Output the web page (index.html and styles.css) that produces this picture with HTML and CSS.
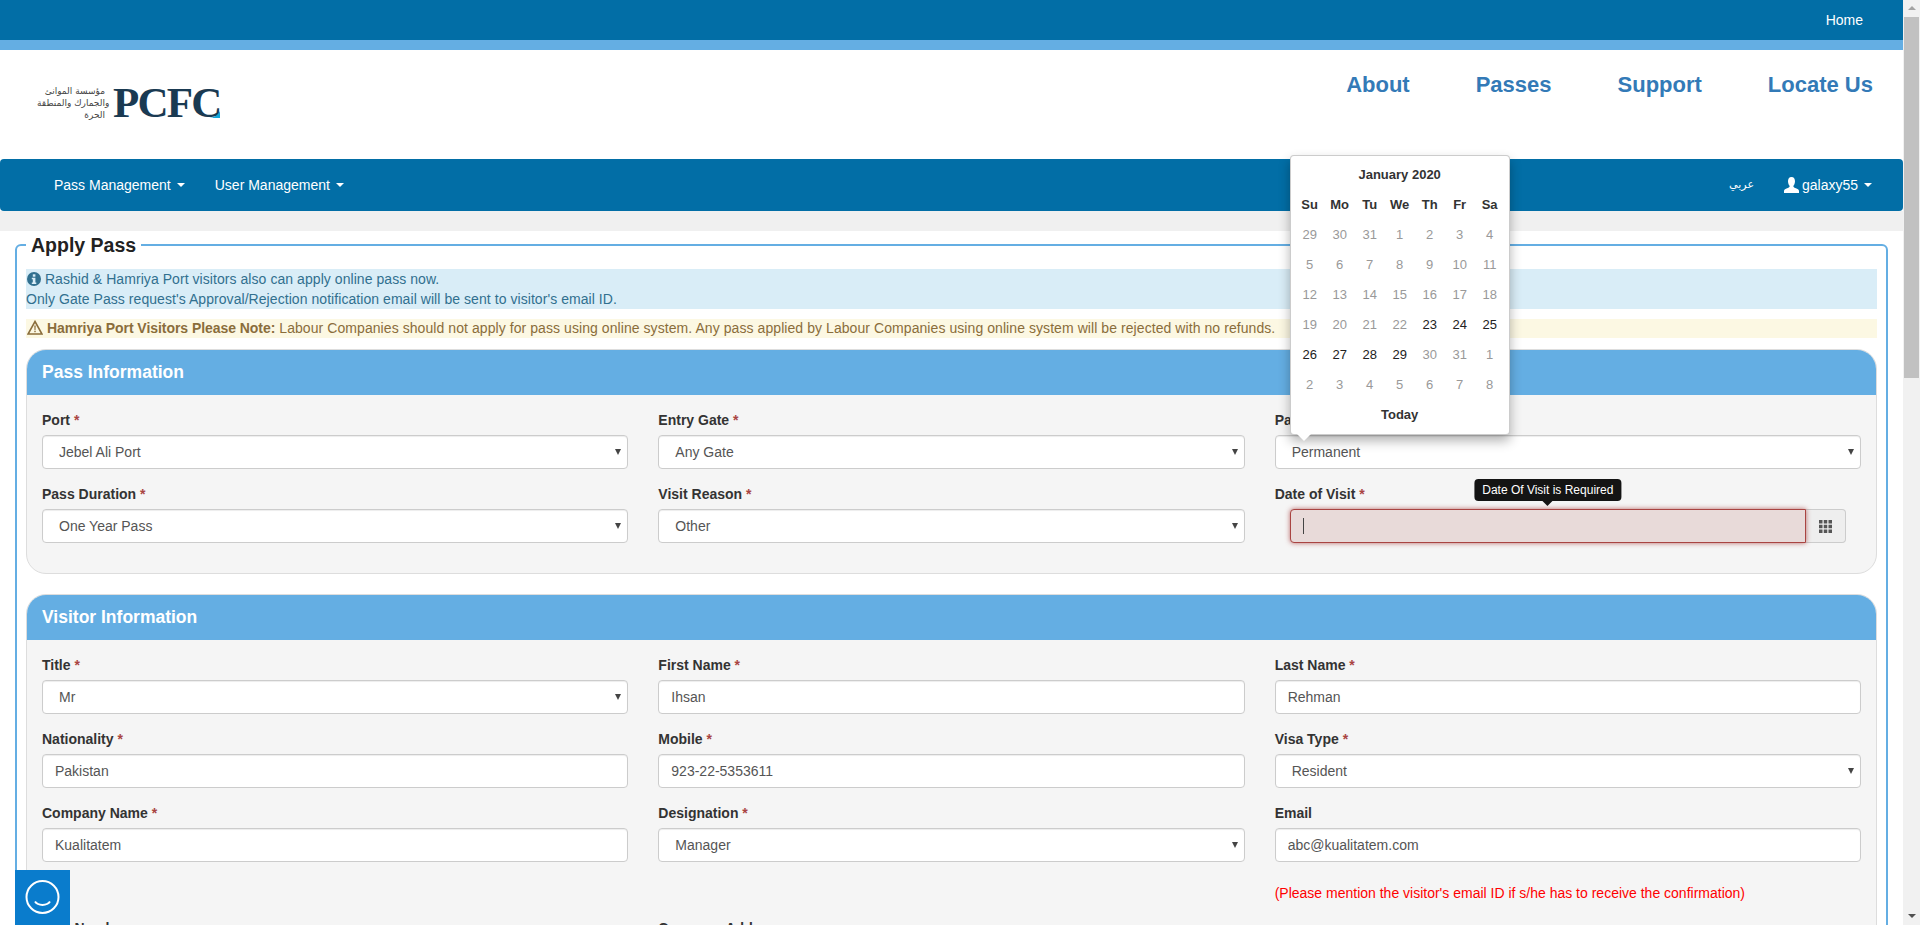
FILE: index.html
```html
<!DOCTYPE html>
<html>
<head>
  <title>Apply Pass</title>
  <link rel="stylesheet" href="styles.css">
</head>
<body>
<div class="window">
  <div class="page">

    <div class="top-bar"><a class="home-link">Home</a></div>

    <header class="site-header">
      <div class="logo">
        <div class="logo-arabic">مؤسسة الموانئ<br>والجمارك والمنطقة<br>الحرة</div>
        <div class="logo-word">PCFC</div>
        <svg class="logo-accent" width="11" height="7" viewBox="0 0 11 7"><path d="M11 0V7H0C5 7 9 4 11 0Z" fill="#12a5d8"/></svg>
      </div>
      <nav class="main-links">
        <a>About</a>
        <a>Passes</a>
        <a>Support</a>
        <a>Locate Us</a>
      </nav>
    </header>

    <nav class="navbar">
      <div class="nav-group">
        <a class="nav-item">Pass Management<span class="caret"></span></a>
        <a class="nav-item">User Management<span class="caret"></span></a>
      </div>
      <div class="nav-group">
        <a class="nav-item nav-arabic">عربي</a>
        <a class="nav-item">
          <svg class="user-icon" width="15" height="16" viewBox="0 0 15 16"><path d="M7.5 0C10 0 11 2 11 4.300C11 6.500 10 8.300 9.300 9C9.300 10.300 10.500 10.800 12.500 11.500C14 12 15 12.800 15 14V16H0V14C0 12.800 1 12 2.500 11.500C4.500 10.800 5.700 10.300 5.700 9C5 8.300 4 6.500 4 4.300C4 2 5 0 7.500 0Z" fill="#fff"/></svg>
          galaxy55<span class="caret"></span>
        </a>
      </div>
    </nav>

    <div class="grey-strip"></div>

    <fieldset class="apply-box">
      <legend>Apply Pass</legend>

      <div class="note-info">
        <svg class="note-icon" width="14" height="14" viewBox="0 0 14 14"><circle cx="7" cy="7" r="7" fill="#31708f"/><rect x="5.800" y="2.300" width="2.600" height="2.400" fill="#d9edf7"/><path d="M4.800 5.800H8.400V10.500H9.300V11.900H4.800V10.500H5.800V7.200H4.800Z" fill="#d9edf7"/></svg>
        Rashid &amp; Hamriya Port visitors also can apply online pass now.<br>
        Only Gate Pass request's Approval/Rejection notification email will be sent to visitor's email ID.
      </div>

      <div class="note-warning">
        <svg class="note-icon" width="16" height="15" viewBox="0 0 16 15"><path d="M8 1.500L15 14H1Z" fill="none" stroke="#8a6d3b" stroke-width="1.600"/><path d="M7.300 5.500H8.700L8.500 10H7.500Z" fill="#8a6d3b"/><rect x="7.300" y="10.700" width="1.400" height="1.500" fill="#8a6d3b"/></svg>
        <strong>Hamriya Port Visitors Please Note:</strong> Labour Companies should not apply for pass using online system. Any pass applied by Labour Companies using online system will be rejected with no refunds.
      </div>

      <section class="panel">
        <h3 class="panel-title">Pass Information</h3>
        <div class="panel-body form-grid">
          <div class="form-group">
            <label>Port <span class="req">*</span></label>
            <div class="select-box"><select><option>Jebel Ali Port</option></select></div>
          </div>
          <div class="form-group">
            <label>Entry Gate <span class="req">*</span></label>
            <div class="select-box"><select><option>Any Gate</option></select></div>
          </div>
          <div class="form-group">
            <label>Pass Type <span class="req">*</span></label>
            <div class="select-box"><select><option>Permanent</option></select></div>
          </div>
          <div class="form-group">
            <label>Pass Duration <span class="req">*</span></label>
            <div class="select-box"><select><option>One Year Pass</option></select></div>
          </div>
          <div class="form-group">
            <label>Visit Reason <span class="req">*</span></label>
            <div class="select-box"><select><option>Other</option></select></div>
          </div>
          <div class="form-group">
            <label>Date of Visit <span class="req">*</span></label>
            <div class="date-group">
              <div class="date-input">
                <input type="text" class="input-error">
                <span class="text-cursor"></span>
                <div class="tooltip">Date Of Visit is Required</div>
              </div>
              <div class="date-addon">
                <svg width="13" height="13" viewBox="0 0 13 13" fill="#555"><path d="M0 0h3.500v3.500H0zM4.750 0h3.500v3.500h-3.500zM9.500 0H13v3.500H9.500zM0 4.750h3.500v3.500H0zM4.750 4.750h3.500v3.500h-3.500zM9.500 4.750H13v3.500H9.500zM0 9.500h3.500V13H0zM4.750 9.500h3.500V13h-3.500zM9.500 9.500H13V13H9.500z"/></svg>
              </div>

              <div class="calendar">
                <table>
                  <tr><th colspan="7">January 2020</th></tr>
                  <tr><th>Su</th><th>Mo</th><th>Tu</th><th>We</th><th>Th</th><th>Fr</th><th>Sa</th></tr>
                  <tr class="off"><td>29</td><td>30</td><td>31</td><td>1</td><td>2</td><td>3</td><td>4</td></tr>
                  <tr class="off"><td>5</td><td>6</td><td>7</td><td>8</td><td>9</td><td>10</td><td>11</td></tr>
                  <tr class="off"><td>12</td><td>13</td><td>14</td><td>15</td><td>16</td><td>17</td><td>18</td></tr>
                  <tr class="off"><td>19</td><td>20</td><td>21</td><td>22</td><td class="on">23</td><td class="on">24</td><td class="on">25</td></tr>
                  <tr class="off"><td class="on">26</td><td class="on">27</td><td class="on">28</td><td class="on">29</td><td>30</td><td>31</td><td>1</td></tr>
                  <tr class="off"><td>2</td><td>3</td><td>4</td><td>5</td><td>6</td><td>7</td><td>8</td></tr>
                  <tr><th colspan="7">Today</th></tr>
                </table>
              </div>
            </div>
          </div>
        </div>
      </section>

      <section class="panel">
        <h3 class="panel-title">Visitor Information</h3>
        <div class="panel-body form-grid">
          <div class="form-group">
            <label>Title <span class="req">*</span></label>
            <div class="select-box"><select><option>Mr</option></select></div>
          </div>
          <div class="form-group">
            <label>First Name <span class="req">*</span></label>
            <input type="text" value="Ihsan">
          </div>
          <div class="form-group">
            <label>Last Name <span class="req">*</span></label>
            <input type="text" value="Rehman">
          </div>
          <div class="form-group">
            <label>Nationality <span class="req">*</span></label>
            <input type="text" value="Pakistan">
          </div>
          <div class="form-group">
            <label>Mobile <span class="req">*</span></label>
            <input type="text" value="923-22-5353611">
          </div>
          <div class="form-group">
            <label>Visa Type <span class="req">*</span></label>
            <div class="select-box"><select><option>Resident</option></select></div>
          </div>
          <div class="form-group">
            <label>Company Name <span class="req">*</span></label>
            <input type="text" value="Kualitatem">
          </div>
          <div class="form-group">
            <label>Designation <span class="req">*</span></label>
            <div class="select-box"><select><option>Manager</option></select></div>
          </div>
          <div class="form-group">
            <label>Email</label>
            <input type="text" value="abc@kualitatem.com">
            <p class="hint">(Please mention the visitor's email ID if s/he has to receive the confirmation)</p>
          </div>
          <div class="form-group">
            <label>Visa Number</label>
            <input type="text">
          </div>
          <div class="form-group">
            <label>Company Address</label>
            <input type="text">
          </div>
        </div>
      </section>
    </fieldset>

    <div class="chat-widget">
      <svg width="55" height="55" viewBox="0 0 55 55"><circle cx="27.500" cy="27" r="16" fill="none" stroke="#fff" stroke-width="2"/><path d="M20 31.500C23 36 32 36 35 31.500" fill="none" stroke="#fff" stroke-width="2"/></svg>
    </div>
  </div>

  <div class="scrollbar">
    <span class="scroll-up"></span>
    <div class="scroll-track"><div class="scroll-thumb"></div></div>
    <span class="scroll-down"></span>
  </div>
</div>
</body>
</html>
```

FILE: styles.css
```css
* {
  box-sizing: border-box;
}

html, body {
  margin: 0;
  height: 925px;
  overflow: hidden;
}

body {
  font-family: "Liberation Sans", Arial, sans-serif;
  font-size: 14px;
  line-height: 20px;
  color: #333;
  background: #fff;
}

.window {
  display: flex;
  height: 925px;
}

.page {
  position: relative;
  flex: 1;
  min-width: 0;
  height: 925px;
  overflow: hidden;
}

/* top */
.top-bar {
  display: flex;
  justify-content: flex-end;
  align-items: center;
  height: 50px;
  padding-right: 40px;
  background: #026ea6;
  border-bottom: 10px solid #64aee3;
}

.home-link {
  color: #fff;
}

.site-header {
  display: flex;
  justify-content: space-between;
  height: 109px;
  padding: 0 30px 0 37px;
}

.logo {
  position: relative;
  display: flex;
  align-items: center;
  gap: 8px;
  height: 31px;
  margin-top: 37px;
}

.logo-arabic {
  width: 68px;
  font-family: "DejaVu Sans", sans-serif;
  font-size: 9px;
  line-height: 12px;
  color: #444;
  text-align: right;
  white-space: nowrap;
}

.logo-word {
  font-family: "Liberation Serif", serif;
  font-size: 43px;
  font-weight: bold;
  letter-spacing: -1.800px;
  line-height: 31px;
  color: #1a3a52;
}

.logo-accent {
  position: absolute;
  right: 0;
  bottom: 0;
}

.main-links {
  display: flex;
  gap: 66px;
  padding-top: 22px;
  font-size: 22px;
  font-weight: bold;
  line-height: 26px;
  color: #337ab7;
}

.navbar {
  display: flex;
  justify-content: space-between;
  height: 52px;
  padding: 0 16px 0 39px;
  background: #026ea6;
  border-radius: 4px;
  color: #fff;
}

.nav-group {
  display: flex;
  align-items: center;
}

.nav-item {
  display: flex;
  align-items: center;
  padding: 0 15px;
  white-space: nowrap;
}

.nav-arabic {
  font-family: "DejaVu Sans", sans-serif;
  font-size: 11px;
}

.user-icon {
  margin-right: 3px;
}

.caret {
  display: inline-block;
  width: 0;
  height: 0;
  margin-left: 6px;
  border-top: 4px solid #fff;
  border-left: 4px solid transparent;
  border-right: 4px solid transparent;
}

.grey-strip {
  height: 20px;
  background: #f0f0f0;
}

/* main box */
.apply-box {
  min-width: 0;
  margin: 0 15px;
  padding: 10px 9px 9px;
  border: 2px solid #64aee3;
  border-radius: 6px;
}

.apply-box legend {
  padding: 0 5px;
  font-size: 19.500px;
  font-weight: bold;
  line-height: 28px;
  color: #222;
}

.note-info {
  background: #d9edf7;
  color: #31708f;
  letter-spacing: 0.06px;
}

.note-warning {
  height: 19px;
  margin-top: 10px;
  line-height: 19px;
  background: #fcf8e3;
  color: #8a6d3b;
  letter-spacing: 0.07px;
}

.note-warning strong {
  letter-spacing: -0.05px;
}

.note-icon {
  vertical-align: -2px;
  margin-left: 1px;
}

.panel {
  margin-top: 11px;
  background: #f5f5f5;
  border: 1px solid #ddd;
  border-radius: 20px;
}

.panel + .panel {
  margin-top: 20px;
}

.panel-title {
  height: 45px;
  margin: 0;
  padding: 0 15px;
  font-size: 17.500px;
  line-height: 45px;
  color: #fff;
  background: #64aee3;
  border-radius: 19px 19px 0 0;
}

.panel-body {
  padding: 15px;
}

.form-grid {
  display: grid;
  grid-template-columns: repeat(3, 1fr);
  column-gap: 30px;
}

.form-group {
  margin-bottom: 15px;
}

label {
  display: block;
  margin-bottom: 5px;
  font-weight: bold;
}

.req {
  color: #a94442;
}

input, select {
  display: block;
  width: 100%;
  height: 34px;
  font-family: "Liberation Sans", Arial, sans-serif;
  font-size: 14px;
  color: #555;
  background: #fff;
  border: 1px solid #ccc;
  border-radius: 4px;
  box-shadow: inset 0 1px 1px rgba(0,0,0,0.075);
}

input {
  padding: 6px 12px;
}

select {
  appearance: none;
  padding: 6px 12px 6px 16px;
}

.select-box {
  position: relative;
}

.select-box::after {
  content: "";
  position: absolute;
  top: 14px;
  right: 7px;
  border-top: 6px solid #444;
  border-left: 3.500px solid transparent;
  border-right: 3.500px solid transparent;
}

.hint {
  margin: 21px 0 0;
  color: #f00;
}

/* date of visit */
.date-group {
  position: relative;
  display: flex;
  margin: 0 15px;
}

.date-input {
  position: relative;
  flex: 1;
}

.input-error {
  background: #e8dad9;
  border-color: #a94442;
  border-radius: 4px 0 0 4px;
  box-shadow: 0 0 5px rgba(169,68,66,0.8);
}

.text-cursor {
  position: absolute;
  left: 13px;
  top: 9px;
  width: 1px;
  height: 16px;
  background: #444;
}

.date-addon {
  display: flex;
  align-items: center;
  justify-content: center;
  width: 40px;
  background: #eee;
  border: 1px solid #ccc;
  border-left: 0;
  border-radius: 0 4px 4px 0;
}

.tooltip {
  position: absolute;
  left: 50%;
  bottom: calc(100% + 8px);
  transform: translateX(-50%);
  padding: 2px 8px;
  font-size: 12px;
  line-height: 18px;
  white-space: nowrap;
  color: #fff;
  background: #141414;
  border-radius: 4px;
}

.tooltip::after {
  content: "";
  position: absolute;
  left: 50%;
  top: 100%;
  margin-left: -5px;
  border-top: 5px solid #141414;
  border-left: 5px solid transparent;
  border-right: 5px solid transparent;
}

.calendar {
  position: absolute;
  left: 0;
  bottom: calc(100% + 74px);
  z-index: 5;
  padding: 4px;
  background: #fff;
  border: 1px solid rgba(0,0,0,0.2);
  border-radius: 4px;
  box-shadow: 0 6px 12px rgba(0,0,0,0.3);
}

.calendar::after {
  content: "";
  position: absolute;
  left: 6px;
  top: 100%;
  border-top: 7px solid #fff;
  border-left: 7px solid transparent;
  border-right: 7px solid transparent;
}

.calendar table {
  border-collapse: collapse;
  font-size: 13px;
}

.calendar th, .calendar td {
  height: 30px;
  min-width: 30px;
  padding: 0;
  text-align: center;
}

.calendar th {
  color: #333;
}

.off td {
  color: #999;
}

.off td.on {
  color: #222;
}

/* chat button */
.chat-widget {
  position: absolute;
  left: 15px;
  bottom: 0;
  width: 55px;
  height: 55px;
  background: #0a7ccc;
}

.chat-widget svg {
  display: block;
}

/* scrollbar of the window */
.scrollbar {
  display: flex;
  flex-direction: column;
  align-items: center;
  width: 17px;
  height: 925px;
  background: #f1f1f1;
}

.scroll-up, .scroll-down {
  flex: none;
  width: 0;
  height: 0;
  border-left: 4px solid transparent;
  border-right: 4px solid transparent;
}

.scroll-up {
  margin: 6px 0 7px;
  border-bottom: 4px solid #a3a3a3;
}

.scroll-down {
  margin: 6px 0 7px;
  border-top: 4px solid #505050;
}

.scroll-track {
  flex: 1;
  width: 100%;
  padding: 0 1px;
}

.scroll-thumb {
  height: 361px;
  background: #c1c1c1;
}
```
